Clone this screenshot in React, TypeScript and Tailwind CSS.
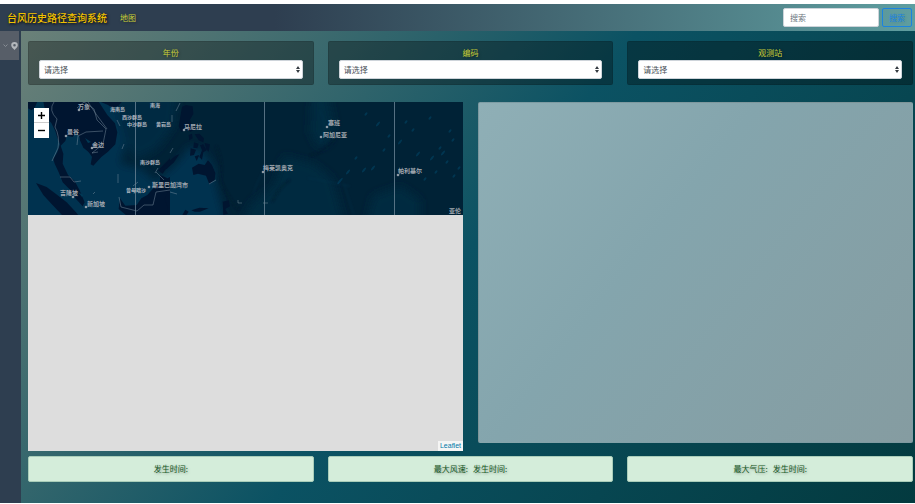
import React from "react";

type Option = { id: string; label: string };

const filters: Option[] = [
  { id: "year", label: "年份" },
  { id: "code", label: "编码" },
  { id: "station", label: "观测站" },
];

const summaries: string[][] = [
  ["发生时间:"],
  ["最大风速:", "发生时间:"],
  ["最大气压:", "发生时间:"],
];

const places: { name: string; x: number; y: number; small?: boolean }[] = [
  { name: "万象", x: 50, y: 7 },
  { name: "海南岛", x: 82, y: 9, small: true },
  { name: "南海", x: 122, y: 5, small: true },
  { name: "西沙群岛", x: 94, y: 17, small: true },
  { name: "中沙群岛", x: 99, y: 24, small: true },
  { name: "黄岩岛", x: 128, y: 24, small: true },
  { name: "曼谷", x: 39, y: 32 },
  { name: "金边", x: 64, y: 45 },
  { name: "马尼拉", x: 156, y: 27 },
  { name: "南沙群岛", x: 112, y: 62, small: true },
  { name: "吉隆坡", x: 32, y: 93 },
  { name: "新加坡", x: 59, y: 104 },
  { name: "曾母暗沙", x: 98, y: 90, small: true },
  { name: "斯里巴加湾市", x: 124, y: 85 },
  { name: "梅莱凯奥克", x: 235, y: 68 },
  { name: "塞班", x: 300, y: 23 },
  { name: "阿加尼亚", x: 295, y: 35 },
  { name: "帕利基尔", x: 370, y: 71 },
  { name: "亚伦", x: 421, y: 111 },
];

const dots: [number, number][] = [
  [51, 8], [38, 34], [64, 46], [156, 28], [45, 95], [58, 105], [121, 85],
  [235, 70], [299, 25], [293, 35], [370, 73],
];

const specks: [number, number, number][] = [
  [338, 12, 2], [350, 22, 3], [361, 34, 2], [372, 40, 3], [385, 28, 2],
  [390, 52, 3], [402, 16, 2], [404, 56, 3], [412, 46, 2], [419, 60, 2],
  [425, 38, 2], [422, 29, 2], [397, 77, 2], [426, 74, 2], [345, 66, 3],
  [356, 48, 2], [320, 70, 3], [328, 56, 2], [312, 79, 4], [336, 68, 3],
  [408, 70, 2], [431, 66, 2], [378, 20, 2], [387, 69, 2], [415, 51, 3],
];

function BaseMap() {
  return (
    <svg
      className="block h-[113px] w-full bg-[#002236]"
      viewBox="0 0 435 113"
      preserveAspectRatio="xMinYMin slice"
      aria-label="地图"
    >
      <defs>
        <filter id="soft" x="-20%" y="-20%" width="140%" height="140%">
          <feGaussianBlur stdDeviation="4" />
        </filter>
        <filter id="trench" x="-20%" y="-20%" width="140%" height="140%">
          <feGaussianBlur stdDeviation="1" />
        </filter>
      </defs>
      <g filter="url(#soft)">
        <path
          fill="#003350"
          d="M-8 -8H84L92 16L98 40L92 62L112 66L128 80L150 60L162 44L176 50L186 66L188 84L198 121H-8Z"
        />
        <path fill="#002b43" d="M84 -8H150L146 24L130 46L108 58L96 40Z" />
        <path fill="#002a41" d="M256 54L286 62L304 76L316 121H212L224 100L246 84Z" />
        <path fill="#00293f" d="M284 -8H300L306 22L302 40L290 46L282 30Z" />
        <path fill="#002a41" d="M345 94L372 84L392 98V121H338Z" />
      </g>
      <path
        d="M188 44Q196 62 192 78Q198 92 210 108M282 54Q298 49 308 36M262 78Q252 84 244 100"
        fill="none"
        stroke="#001b2d"
        strokeWidth="2"
        opacity=".6"
        filter="url(#trench)"
      />
      <path
        d="M292 8Q300 24 292 42M225 92Q232 70 242 62M280 76L322 84M316 82L326 113"
        fill="none"
        stroke="#003a55"
        opacity=".4"
        filter="url(#trench)"
      />
      {specks.map(([x, y, r]) => (
        <ellipse key={`${x}-${y}`} cx={x} cy={y} rx={r} ry={1} fill="#004a6b" opacity=".5" transform={`rotate(-50 ${x} ${y})`} />
      ))}

      {/* Mainland, peninsula and Sumatra */}
      <g transform="translate(-8 -7) scale(.33333)" fill="#001530">
        <path d="M70 20H236L262 60L285 85L292 112L286 148L264 170L244 186L220 212L212 208L216 186L204 168L194 158L186 142L176 120L168 112L158 126L140 122L136 138L122 152L130 176L128 206L144 240L164 258L178 284L194 322L188 334L166 310L150 284L128 262L116 232L104 206L100 192L112 172L120 148L112 128L106 108L94 84L80 70Z" />
        <path d="M178 112L200 104L262 108L262 148L240 180L214 178L190 158L180 136Z" />
        <path d="M24 20H52L44 38L34 46L24 40Z" />
        <path d="M48 264L80 276L112 300L140 322L168 352L176 362H128L94 326L70 300Z" />
        <path d="M240 20H306L294 34L276 38L264 30Z" />
        <path d="M300 310L316 332L350 330L364 310L382 300L398 282L420 260L450 246V362H320L296 342Z" />
        <path d="M414 226L450 190V204L428 236Z" />
      </g>
      <path fill="#003d59" opacity=".9" d="M57 36L63 40L60 41ZM50 90L55 93L54 95Z" />

      {/* Philippines, northern Borneo and Sulawesi */}
      <g transform="translate(132 -7) scale(.33333)" fill="#001530">
        <path d="M66 36L78 30L98 34L100 56L90 74L94 86L106 102L92 110L78 104L64 110L56 94L60 70Z" />
        <path d="M86 120L96 116L98 130L88 136ZM104 118L118 116L132 130L130 142L116 136ZM102 142L116 146L112 160L100 158ZM120 150L130 148L140 166L130 172L126 194L118 186L126 166ZM92 160L108 164L102 180L90 182ZM104 184L118 180L110 198ZM134 144L150 148L146 170L138 162Z" />
        <path d="M96 218L116 206L134 210L144 196L156 210L166 234L164 254L148 268L138 242L114 236L100 240Z" />
        <path d="M8 218L28 198L46 182L58 178L42 202L22 220L10 226Z" />
        <path d="M0 240L20 248L28 270L24 290L14 312L24 340L22 362H0Z" />
        <path d="M94 346L118 338L146 340L120 350H104ZM188 320L206 316L210 334L196 342L204 356L190 360Z" />
        <path d="M76 344L86 350L78 362H66Z" />
      </g>
      <path
        d="M26 0Q20 8 29 17L27 25Q32 34 30 46L24 59M49 6L56 0L66 7L69 18L78 27L75 42L69 47L64 51L70 50M49 43L50 34L58 30L75 29M60 0L68 12L79 27M32 75L42 75L46 80L53 79M91 95L93 105L109 109L116 103L125 103L128 90L142 88M128 70L136 78M90 72V81M94 47L96 42M89 18L92 24M65 92L67 90M105 84L110 80M127 71L130 66M142 51L145 46M144 13V20M148 9L152 1M181 82L188 78M210 98V101H214M235 101H240M142 90L149 92"
        fill="none"
        stroke="#8295a4"
        strokeWidth=".7"
        opacity=".65"
      />
      <path d="M107.5 0V113M236.500 0V113M366.500 0V113" stroke="#6b8496" strokeWidth="1" opacity=".8" />
      {dots.map(([x, y]) => (
        <circle key={`${x}-${y}`} cx={x} cy={y} r="1.300" fill="#8e9aa5" />
      ))}
      {places.map((p) => (
        <text
          key={p.name}
          x={p.x}
          y={p.y}
          className={
            p.small
              ? "fill-[#b4bbc2] font-['Noto_Sans_CJK_SC',sans-serif] text-[5px] font-bold"
              : "fill-[#a0a7af] font-['Noto_Sans_CJK_SC',sans-serif] text-[6px] font-bold"
          }
        >
          {p.name}
        </text>
      ))}
    </svg>
  );
}

function FilterCard({ id, label }: Option) {
  return (
    <div className="flex h-11 flex-col rounded-xs border border-black/10 bg-black/32 px-[10px] pt-[5px]">
      <label
        htmlFor={id}
        className="mb-[2px] text-center text-[8px] leading-[11px] text-[#c9d03a] [text-shadow:1px_1px_3px_#0006]"
      >
        {label}
      </label>
      <div className="relative">
        <select
          id={id}
          className="block h-[19px] w-full appearance-none rounded-xs border border-[#ced4da] bg-white px-1 text-[8px] leading-[16px] text-[#495057]"
        >
          <option>请选择</option>
        </select>
        <svg
          className="pointer-events-none absolute top-[6px] right-[3px] h-[7px] w-1 fill-[#343a40]"
          viewBox="0 0 4 7"
          aria-hidden="true"
        >
          <path d="M2 0L4 3H0ZM2 7L0 4H4Z" />
        </svg>
      </div>
    </div>
  );
}

export default function App() {
  return (
    <div className="flex min-h-screen flex-col bg-white pt-1 font-['Noto_Sans_CJK_SC','Noto_Sans',sans-serif]">
      <header className="flex h-[27px] items-center bg-[linear-gradient(90deg,#2e3e50_30%,#5f9ea0)] pr-[3px] pl-[7px]">
        <h1 className="text-[10px] leading-[15px] font-medium text-[#f2c200] [text-shadow:1px_1px_3px_#000]">
          台风历史路径查询系统
        </h1>
        <a href="#map" className="ml-[13px] text-[8px] leading-[12px] text-[#c9d03a] [text-shadow:1px_1px_3px_#0006]">
          地图
        </a>
        <form className="ml-auto flex gap-[3px]" onSubmit={(e: React.FormEvent) => e.preventDefault()}>
          <input
            type="search"
            aria-label="搜索"
            placeholder="搜索"
            className="h-[19px] w-24 rounded-xs border border-[#ced4da] bg-white px-[6px] text-[8px] leading-[12px] text-[#495057] placeholder:text-[#6c757d]"
          />
          <button
            type="submit"
            className="h-[19px] w-[30px] rounded-xs border border-[#1b83e0] text-[8px] leading-[12px] text-[#1b83e0] [text-shadow:1px_1px_3px_#0002]"
          >
            搜索
          </button>
        </form>
      </header>

      <div className="mb-px flex flex-1">
        <nav className="w-[21px] shrink-0 bg-[#2e3e50]">
          <a href="#map" aria-label="地图" className="flex h-[29px] w-[19px] items-center justify-end gap-[3px] bg-[#575e68] pr-px">
            <svg className="h-[3px] w-[5px]" viewBox="0 0 5 3" fill="none" stroke="#9298a0" aria-hidden="true">
              <path d="M.5.5L2.500 2.500L4.500.5" strokeWidth=".8" />
            </svg>
            <svg className="h-2 w-[7px]" viewBox="0 0 7 8" fill="#b3b7bc" aria-hidden="true">
              <path
                fillRule="evenodd"
                d="M3.500 0A3.300 3.300 0 0 0 .2 3.300C.2 5.200 2 6.400 3.500 8C5 6.400 6.800 5.200 6.800 3.300A3.300 3.300 0 0 0 3.500 0ZM3.500 2A1.300 1.300 0 1 1 3.500 4.600A1.300 1.300 0 0 1 3.500 2Z"
              />
            </svg>
          </a>
        </nav>

        <main className="flex flex-1 flex-col bg-[linear-gradient(128deg,#6b8179,#0b5263_49%,#033a3f)] pt-[10px] pr-[2px] pb-[21px] pl-[7px]">
          <div className="grid grid-cols-3 gap-[14px]">
            {filters.map((f) => (
              <FilterCard key={f.id} id={f.id} label={f.label} />
            ))}
          </div>

          <div className="mt-[17px] grid flex-1 grid-cols-2 gap-[15px]">
            <section id="map" className="relative bg-[#ddd]">
              <BaseMap />
              <div className="absolute top-[6px] left-[6px] flex flex-col divide-y divide-[#ccc] bg-white">
                <button type="button" aria-label="放大" className="flex h-[15px] w-[15px] items-center justify-center">
                  <svg className="h-[7px] w-[7px]" viewBox="0 0 7 7" stroke="#000" strokeWidth="1.400">
                    <path d="M0 3.500H7M3.500 0V7" />
                  </svg>
                </button>
                <button type="button" aria-label="缩小" className="flex h-[15px] w-[15px] items-center justify-center">
                  <svg className="h-[7px] w-[7px]" viewBox="0 0 7 7" stroke="#000" strokeWidth="1.400">
                    <path d="M0 3.500H7" />
                  </svg>
                </button>
              </div>
              <a
                href="#map"
                className="absolute right-0 bottom-0 bg-white/70 px-[2px] font-['Liberation_Sans',Arial,sans-serif] text-[7px] leading-[10px] text-[#0078a8]"
              >
                Leaflet
              </a>
            </section>
            <section className="mb-2 rounded-xs border border-black/5 bg-[linear-gradient(128deg,#8fafb6,#84a5ad_40%,#859ca1)]" />
          </div>

          <div className="mt-[5px] grid grid-cols-3 gap-[14px]">
            {summaries.map((parts) => (
              <div
                key={parts.join()}
                role="status"
                className="flex h-[26px] items-center justify-center gap-[5px] rounded-xs border border-[#a9cdb9] bg-[#d4edda] text-[8px] leading-[12px] text-[#155724] [text-shadow:1px_1px_3px_#0005]"
              >
                {parts.map((p) => (
                  <span key={p}>{p}</span>
                ))}
              </div>
            ))}
          </div>
        </main>
      </div>
    </div>
  );
}
